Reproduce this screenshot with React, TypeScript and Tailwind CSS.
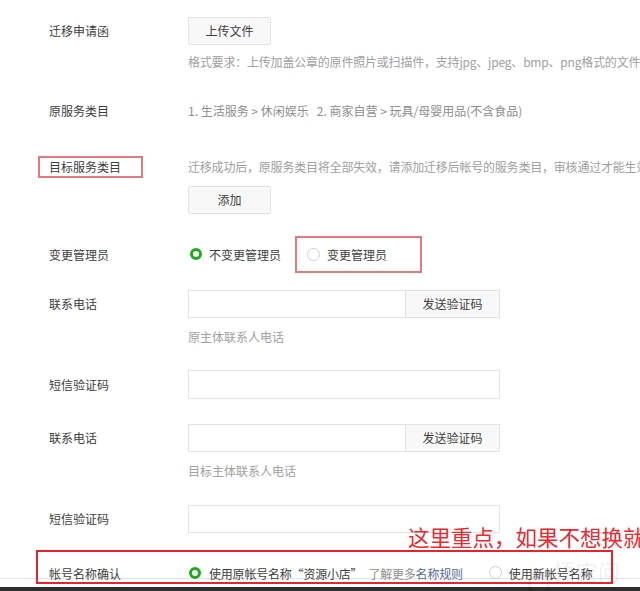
import React from "react";

function Radio({ checked }: { checked?: boolean }) {
  return checked ? (
    <span className="inline-block h-[12px] w-[12px] shrink-0 rounded-full border-[3px] border-[#1aad19] bg-white" />
  ) : (
    <span className="inline-block h-[13px] w-[13px] shrink-0 rounded-full border border-[#cfcfcf] bg-white" />
  );
}

function Label({ children, className = "" }: { children: React.ReactNode; className?: string }) {
  return <div className={`w-[139px] shrink-0 text-[#3e3e3e] ${className}`}>{children}</div>;
}

function PhoneInput() {
  return (
    <div className="flex h-[28px] w-[312px]">
      <div className="h-full w-[218px] border border-[#e3e3e3] bg-white" />
      <button className="-ml-px h-full w-[95px] border border-[#e3e3e3] bg-[#f8f8f8] text-[#3e3e3e]">
        发送验证码
      </button>
    </div>
  );
}

export default function App() {
  return (
    <div className="relative h-[591px] w-[640px] overflow-hidden bg-white font-['Microsoft_YaHei','Noto_Sans_CJK_SC',sans-serif] text-[12px]">
      <div className="h-[579px] border-b border-[#e6e6e6] pl-[49px] pt-[17px]">
        {/* 迁移申请函 */}
        <div className="flex">
          <Label className="leading-[28px]">迁移申请函</Label>
          <div>
            <button className="h-[28px] w-[83px] rounded-[2px] border border-[#e2e2e2] bg-[#f8f8f8] text-[#3e3e3e]">
              上传文件
            </button>
            <p className="mt-[10px] whitespace-nowrap leading-[14px] tracking-[-0.2px] text-[#a0a0a0]">
              格式要求：上传加盖公章的原件照片或扫描件，支持jpg、jpeg、bmp、png格式的文件
            </p>
          </div>
        </div>

        {/* 原服务类目 */}
        <div className="mt-[32px] flex leading-[20px]">
          <Label>原服务类目</Label>
          <div className="whitespace-nowrap text-[#8e8e8e]">
            1. 生活服务 &gt; 休闲娱乐&nbsp;&nbsp;&nbsp;2. 商家自营 &gt; 玩具/母婴用品(不含食品)
          </div>
        </div>

        {/* 目标服务类目 */}
        <div className="mt-[35px] flex">
          <Label>
            <span className="-ml-[11px] inline-block h-[22px] w-[105px] border-2 border-[#e5797e] pl-[9px] leading-[18px]">
              目标服务类目
            </span>
          </Label>
          <div>
            <p className="whitespace-nowrap leading-[22px] tracking-[-0.2px] text-[#a0a0a0]">
              迁移成功后，原服务类目将全部失效，请添加迁移后帐号的服务类目，审核通过才能生效
            </p>
            <button className="mt-[8px] h-[28px] w-[83px] rounded-[2px] border border-[#e2e2e2] bg-[#f8f8f8] text-[#3e3e3e]">
              添加
            </button>
          </div>
        </div>

        {/* 变更管理员 */}
        <div className="mt-[22px] flex h-[37px] items-center">
          <Label>变更管理员</Label>
          <div className="flex items-center text-[#3e3e3e]">
            <span className="ml-[2px]">
              <Radio checked />
            </span>
            <span className="ml-[7px]">不变更管理员</span>
            <div className="ml-[14px] flex h-[37px] w-[127px] items-center border-2 border-[#e5797e] pl-[10px]">
              <Radio />
              <span className="ml-[7px]">变更管理员</span>
            </div>
          </div>
        </div>

        {/* 联系电话 */}
        <div className="mt-[17px] flex">
          <Label className="leading-[28px]">联系电话</Label>
          <div>
            <PhoneInput />
            <p className="mt-[12px] leading-[14px] text-[#a0a0a0]">原主体联系人电话</p>
          </div>
        </div>

        {/* 短信验证码 */}
        <div className="mt-[26px] flex">
          <Label className="leading-[29px]">短信验证码</Label>
          <div className="h-[29px] w-[312px] border border-[#e3e3e3]" />
        </div>

        {/* 联系电话 */}
        <div className="mt-[25px] flex">
          <Label className="leading-[28px]">联系电话</Label>
          <div>
            <PhoneInput />
            <p className="mt-[12px] leading-[14px] text-[#a0a0a0]">目标主体联系人电话</p>
          </div>
        </div>

        {/* 短信验证码 */}
        <div className="mt-[27px] flex">
          <Label className="leading-[28px]">短信验证码</Label>
          <div className="h-[28px] w-[312px] border border-[#e3e3e3]" />
        </div>

        {/* 帐号名称确认 */}
        <div className="-ml-[13px] mt-[17px] flex h-[34px] w-[577px] items-end border-2 border-[#e8242b] pb-[1px] pl-[11px] leading-[14px]">
          <Label>帐号名称确认</Label>
          <div className="flex items-center whitespace-nowrap text-[#3e3e3e]">
            <span className="ml-[1px]">
              <Radio checked />
            </span>
            <span className="ml-[8px] tracking-[-0.2px]">使用原帐号名称“资源小店”</span>
            <span className="ml-[6px] tracking-[-0.2px] text-[#8e8e8e]">
              了解更多<span className="text-[#576b95]">名称规则</span>
            </span>
            <span className="ml-[26px]">
              <Radio />
            </span>
            <span className="ml-[7px]">使用新帐号名称</span>
          </div>
        </div>
      </div>
      <div className="mt-[8px] h-[4px] bg-[#2e2e2e]" />

      {/* annotation */}
      <div className="absolute left-[408px] top-[524px] whitespace-nowrap text-[21.5px] leading-[26px] text-[#f0282d]">
        这里重点，如果不想换就
      </div>

      {/* watermark */}
      <div className="pointer-events-none absolute left-[528px] top-[556px] flex items-center gap-[4px] text-[22px] leading-[28px] text-[#000]/[0.07]">
        <span className="inline-block h-[22px] w-[22px] rounded-full border-[3px] border-[#000]/[0.07]" />
        <span>悟空问答</span>
      </div>
    </div>
  );
}
